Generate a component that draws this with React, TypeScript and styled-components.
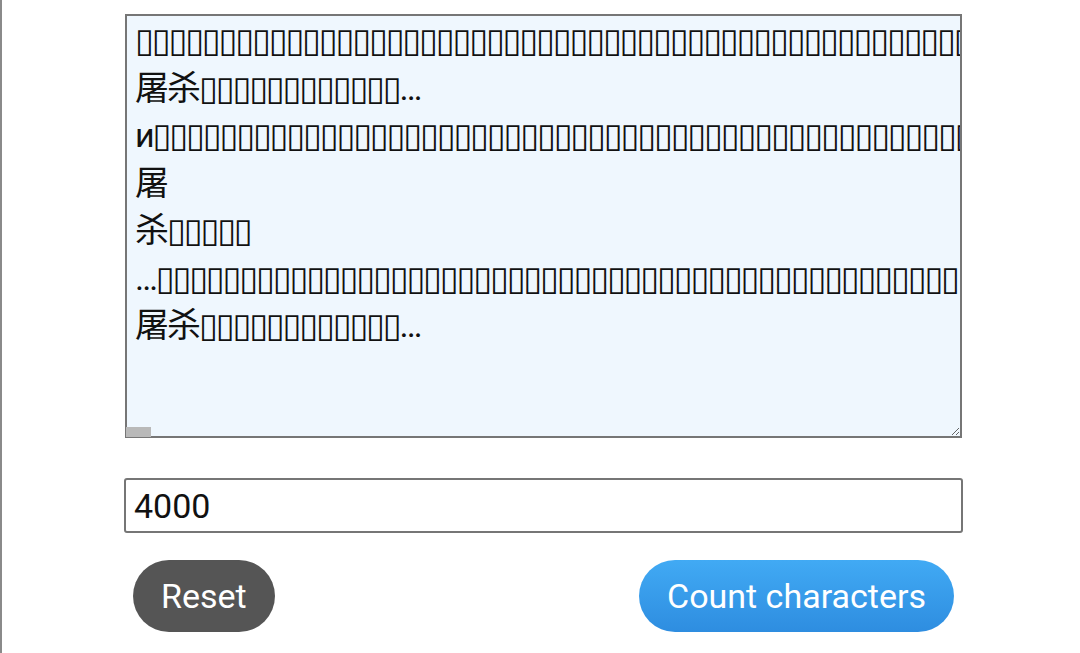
import React, { useState } from "react";
import styled, { createGlobalStyle } from "styled-components";

const GlobalStyle = createGlobalStyle`
  html, body { margin: 0; padding: 0; background: #ffffff; }
  body { font-family: Roboto, "Noto Sans CJK SC", sans-serif; }
`;

const Page = styled.div`
  box-sizing: border-box;
  min-height: 653px;
  border-left: 2px solid #8a8a8a;
  padding: 14px 0 0 122px;
`;

const Form = styled.form`
  width: 839px;
  display: flex;
  flex-direction: column;
`;

const TextWrap = styled.div`
  position: relative;
  width: 837px;
  height: 424px;
  margin: 0 0 40px 1px;
`;

const TextBox = styled.textarea`
  display: block;
  box-sizing: border-box;
  width: 100%;
  height: 100%;
  margin: 0;
  padding: 1px 8px;
  border: 2px solid #767676;
  border-radius: 0;
  background: #eff7fe;
  color: #111;
  font-family: Roboto, "DejaVu Sans", "Noto Sans CJK SC", sans-serif;
  font-size: 34px;
  line-height: 47.5px;
  letter-spacing: -2px;
  white-space: pre;
  overflow: hidden;
  outline: none;
`;

const ScrollThumb = styled.div`
  position: absolute;
  left: 1px;
  bottom: 1px;
  width: 25px;
  height: 10px;
  background: #b9b9b9;
  pointer-events: none;
`;

const NumberInput = styled.input`
  box-sizing: border-box;
  width: 839px;
  height: 55px;
  padding: 0 8px;
  border: 2px solid #767676;
  border-radius: 3px;
  background: #fff;
  color: #111;
  font-family: Roboto, sans-serif;
  font-size: 34px;
  outline: none;
`;

const ButtonRow = styled.div`
  display: flex;
  justify-content: space-between;
  align-items: center;
  padding: 27px 9px 0 9px;
`;

const PillButton = styled.button<{ $primary?: boolean }>`
  border: none;
  border-radius: 36px;
  height: 72px;
  padding: 0 28px;
  font-family: Roboto, sans-serif;
  font-size: 34px;
  color: #fff;
  background: ${(p) => (p.$primary ? "linear-gradient(#41aaf4, #2e8de0)" : "#555555")};
  cursor: pointer;
`;

const B = "\u25AF";
const text = [
  B.repeat(260),
  "屠杀" + B.repeat(12) + "…",
  "и" + B.repeat(240),
  "屠",
  "杀" + B.repeat(5),
  "…" + B.repeat(250),
  "屠杀" + B.repeat(12) + "…",
].join("\n");

export default function App() {
  const [value, setValue] = useState(text);
  const [limit, setLimit] = useState("4000");
  return (
    <>
      <GlobalStyle />
      <Page>
        <Form onSubmit={(e) => e.preventDefault()}>
          <TextWrap>
            <TextBox wrap="off" value={value} onChange={(e) => setValue(e.target.value)} />
            <ScrollThumb />
          </TextWrap>
          <NumberInput type="text" value={limit} onChange={(e) => setLimit(e.target.value)} />
          <ButtonRow>
            <PillButton type="button" onClick={() => setValue("")}>Reset</PillButton>
            <PillButton type="submit" $primary>Count characters</PillButton>
          </ButtonRow>
        </Form>
      </Page>
    </>
  );
}
